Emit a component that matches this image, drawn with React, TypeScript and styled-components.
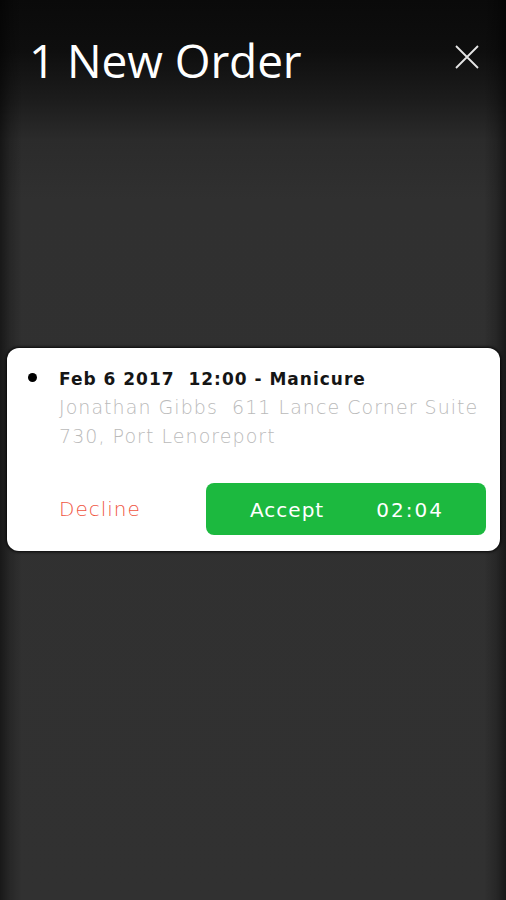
import React from "react";
import styled, { createGlobalStyle } from "styled-components";

const GlobalStyle = createGlobalStyle`
  html, body {
    margin: 0;
    padding: 0;
    background: #0b0b0b;
  }
  * {
    box-sizing: border-box;
  }
`;

const Screen = styled.div`
  width: 100%;
  min-height: 900px;
  display: flex;
  flex-direction: column;
  font-family: "Open Sans", "Noto Sans", sans-serif;
  background:
    linear-gradient(
      to right,
      rgba(0, 0, 0, 0.5) 0,
      rgba(0, 0, 0, 0.2) 10px,
      rgba(0, 0, 0, 0) 22px,
      rgba(0, 0, 0, 0) calc(100% - 22px),
      rgba(0, 0, 0, 0.2) calc(100% - 10px),
      rgba(0, 0, 0, 0.5) 100%
    ),
    linear-gradient(
      to bottom,
      #0a0a0a 0,
      #0e0e0e 50px,
      #1c1c1c 100px,
      #2b2b2b 140px,
      #303030 200px,
      #313131 100%
    );
`;

const Header = styled.div`
  display: flex;
  align-items: flex-start;
  justify-content: space-between;
  padding: 33px 27px 0 29px;
`;

const Title = styled.h1`
  margin: 0;
  font-size: 46px;
  line-height: 55px;
  font-weight: 400;
  color: #ffffff;
  letter-spacing: -0.1px;
`;

const CloseButton = styled.button`
  width: 24px;
  height: 24px;
  margin-top: 12px;
  padding: 0;
  border: none;
  background: none;
  display: flex;
  align-items: center;
  justify-content: center;
`;

const Card = styled.div`
  margin: 260px 6px 0 7px;
  background: #ffffff;
  border-radius: 12px;
  box-shadow: 0 0 3px 1px rgba(0, 0, 0, 0.85);
  padding: 17px 14px 16px 0;
  display: flex;
  flex-direction: column;
  font-family: "DejaVu Sans", "Noto Sans", sans-serif;
`;

const OrderRow = styled.div`
  display: flex;
  align-items: flex-start;
`;

const Bullet = styled.span`
  width: 9px;
  height: 9px;
  border-radius: 50%;
  background: #000000;
  margin: 8px 22px 0 21px;
  flex-shrink: 0;
`;

const OrderText = styled.div`
  display: flex;
  flex-direction: column;
`;

const OrderTitle = styled.div`
  font-size: 17px;
  line-height: 28px;
  font-weight: 600;
  letter-spacing: 1px;
  color: #151515;
  white-space: pre-wrap;
`;

const OrderAddress = styled.div`
  font-size: 19px;
  line-height: 29px;
  font-weight: 200;
  letter-spacing: 1.05px;
  color: #bababa;
  white-space: pre-wrap;
  width: 426px;
`;

const Actions = styled.div`
  display: flex;
  align-items: center;
  justify-content: space-between;
  margin-top: 32px;
  padding-left: 52px;
`;

const DeclineButton = styled.button`
  border: none;
  background: none;
  padding: 0;
  font-family: inherit;
  font-size: 20px;
  font-weight: 200;
  letter-spacing: 1px;
  color: #f0553f;
`;

const AcceptButton = styled.button`
  width: 280px;
  height: 52px;
  border: none;
  border-radius: 8px;
  background: #1cb93f;
  display: flex;
  align-items: center;
  justify-content: space-between;
  padding: 2px 44px 0;
  font-family: inherit;
  font-size: 20px;
  color: #ffffff;
`;

const AcceptLabel = styled.span`
  letter-spacing: 1px;
`;

const Timer = styled.span`
  letter-spacing: 2px;
  margin-right: -2px;
`;

const CloseIcon = () => (
  <svg width="24" height="24" viewBox="0 0 24 24">
    <path d="M1 1 L23 23 M23 1 L1 23" stroke="#e6e6e6" strokeWidth="1.8" fill="none" />
  </svg>
);

const App: React.FC = () => {
  return (
    <>
      <GlobalStyle />
      <Screen>
        <Header>
          <Title>1 New Order</Title>
          <CloseButton aria-label="Close">
            <CloseIcon />
          </CloseButton>
        </Header>
        <Card>
          <OrderRow>
            <Bullet />
            <OrderText>
              <OrderTitle>{"Feb 6 2017  12:00 - Manicure"}</OrderTitle>
              <OrderAddress>
                {"Jonathan Gibbs  611 Lance Corner Suite 730, Port Lenoreport"}
              </OrderAddress>
            </OrderText>
          </OrderRow>
          <Actions>
            <DeclineButton>Decline</DeclineButton>
            <AcceptButton>
              <AcceptLabel>Accept</AcceptLabel>
              <Timer>02:04</Timer>
            </AcceptButton>
          </Actions>
        </Card>
      </Screen>
    </>
  );
};

export default App;
